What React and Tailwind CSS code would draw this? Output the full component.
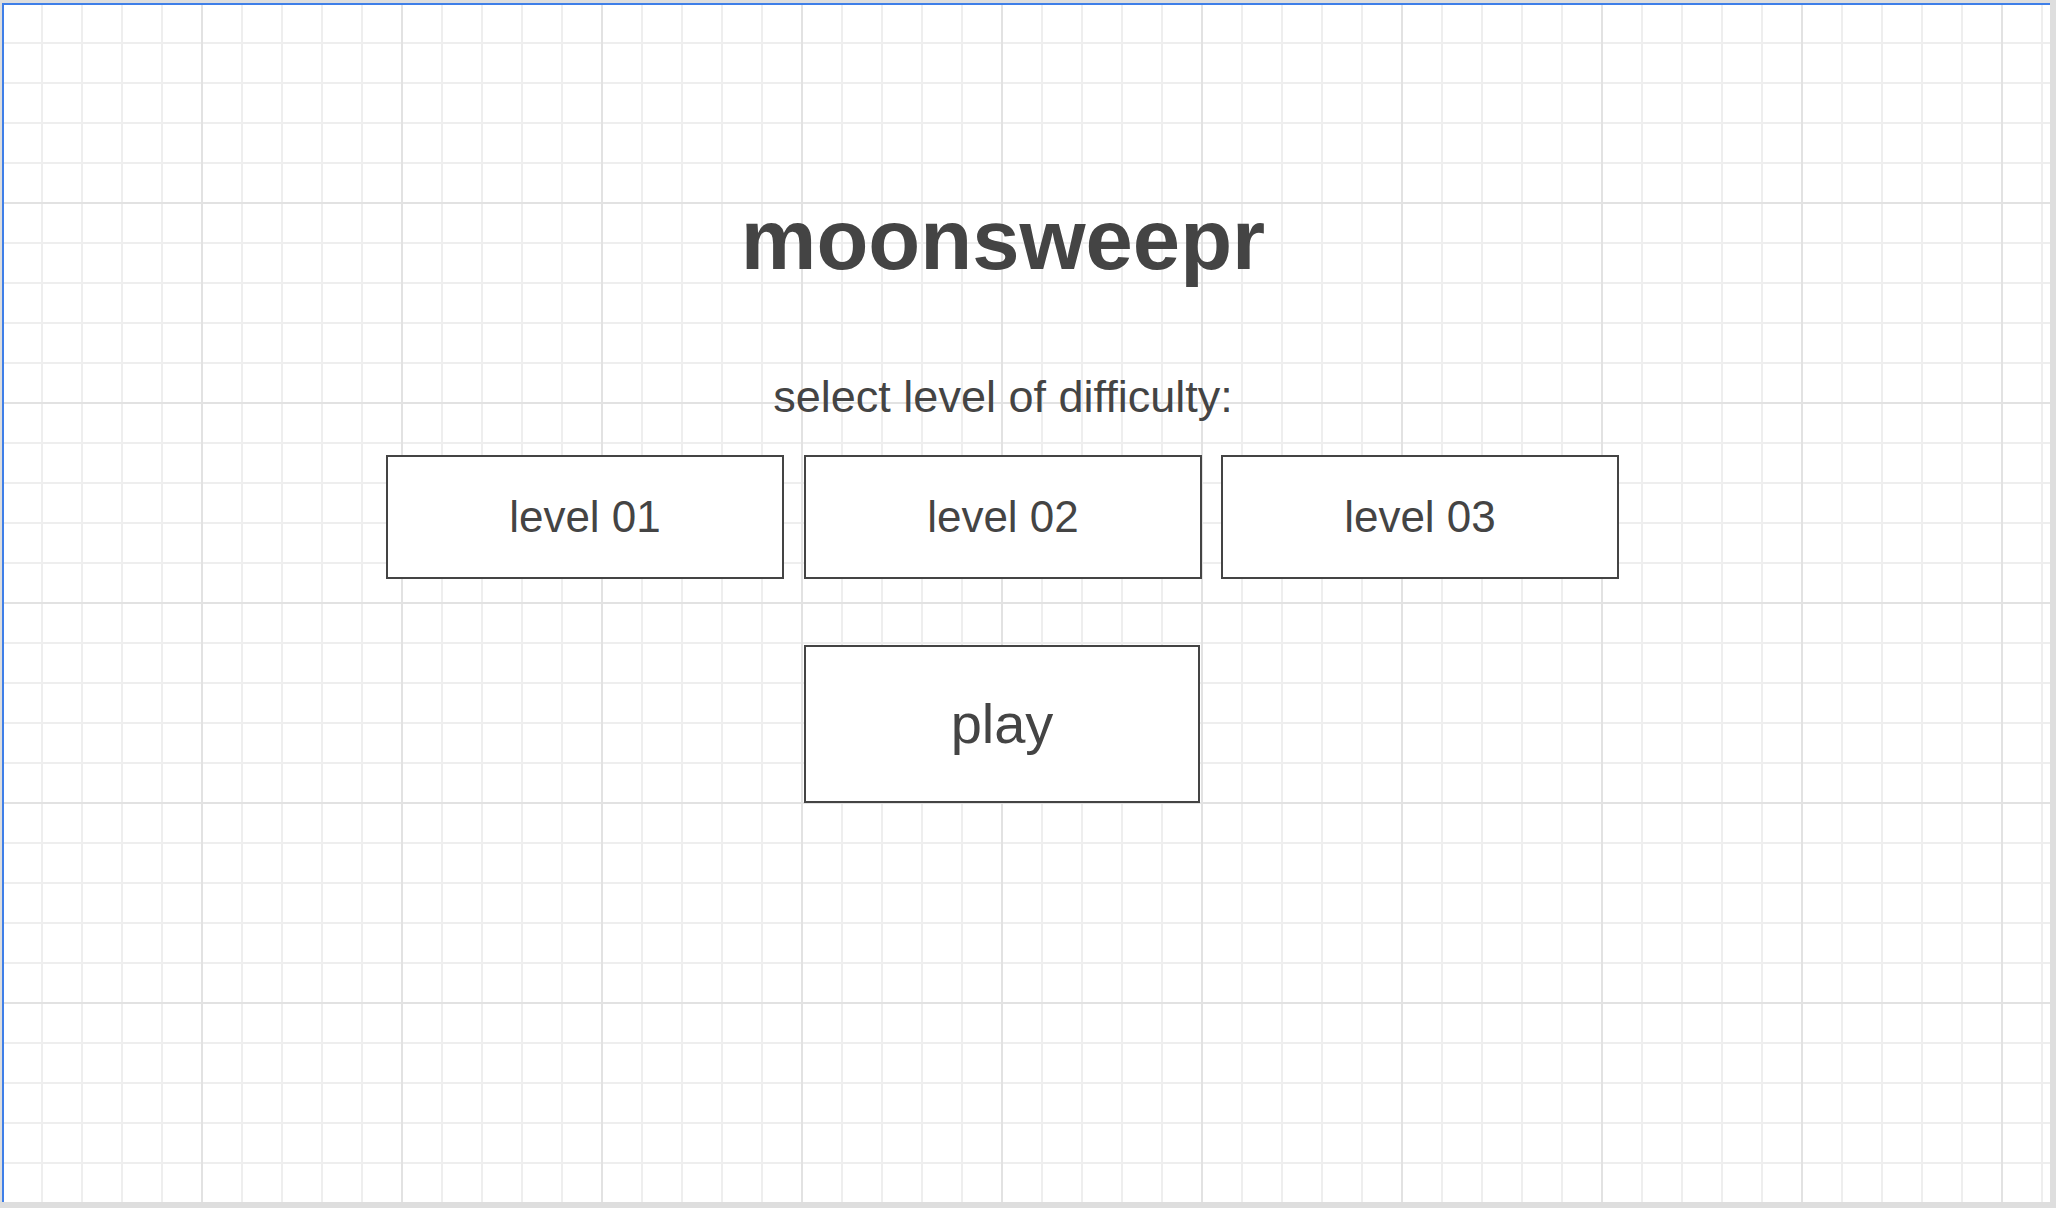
export default function App() {
  const font = { fontFamily: '"Liberation Sans", Arial, sans-serif' };
  return (
    <div
      className="w-[2056px] h-[1208px] bg-[#dedede] pt-[3px] pl-[2px] pr-[6px] pb-[6px] flex"
      style={font}
    >
      <div className="flex-1 border-t-2 border-l-2 border-[#3f7fe8] bg-white bg-[linear-gradient(to_right,#e2e2e2_2px,transparent_2px),linear-gradient(to_bottom,#e2e2e2_2px,transparent_2px),linear-gradient(to_right,#eeeeee_2px,transparent_2px),linear-gradient(to_bottom,#eeeeee_2px,transparent_2px)] bg-size-[200px_200px,200px_200px,40px_40px,40px_40px] bg-position-[197px_197px,197px_197px,37px_37px,37px_37px]">
        <div className="ml-[382px] w-[1234px] flex flex-col items-center text-[#444444]">
          <h1 className="mt-[192px] text-[85px] leading-none font-bold">moonsweepr</h1>
          <p className="mt-[92px] text-[45px] leading-none">select level of difficulty:</p>
          <div className="mt-[36px] flex self-start">
            {["level 01", "level 02", "level 03"].map((l, i) => (
              <button
                key={l}
                className={
                  (i === 0 ? "" : i === 1 ? "ml-[20px] " : "ml-[19px] ") +
                  "w-[398px] h-[124px] border-2 border-[#444444] bg-white flex items-center justify-center text-[44px] leading-none"
                }
              >
                {l}
              </button>
            ))}
          </div>
          <button className="mt-[66px] self-start ml-[418px] w-[396px] h-[158px] border-2 border-[#444444] bg-white flex items-center justify-center text-[56px] leading-none">
            play
          </button>
        </div>
      </div>
    </div>
  );
}
